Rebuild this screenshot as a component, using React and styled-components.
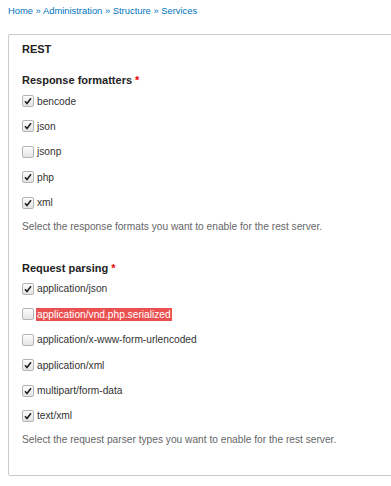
import React from 'react';
import styled, { createGlobalStyle } from 'styled-components';

const GlobalStyle = createGlobalStyle`
  body {
    margin: 0;
    background: #fff;
    font-family: 'Liberation Sans', Arial, sans-serif;
    color: #333;
  }
`;

const Page = styled.div`
  padding: 4px 8px 0 8px;
`;

const Breadcrumb = styled.div`
  font-size: 9.4px;
  line-height: 13px;
  color: #0074bd;
  a {
    color: #0074bd;
    text-decoration: none;
  }
`;

const Fieldset = styled.fieldset`
  margin: 17px -20px 0 0;
  padding: 7px 13px 28px 13px;
  border: 1px solid #ccc;
  border-radius: 2px;
  box-shadow: inset 0 0 1px rgba(0, 0, 0, 0.05);
  min-width: 0;
`;

const Legend = styled.div`
  font-size: 11px;
  font-weight: bold;
  line-height: 14px;
  color: #222;
  margin-bottom: 17px;
`;

const Group = styled.div`
  margin-bottom: ${(p) => p.$gap || 0}px;
`;

const GroupTitle = styled.div`
  font-size: 11px;
  font-weight: bold;
  line-height: 14px;
  color: #222;
  margin-bottom: 7px;
  .req {
    color: #e00;
    margin-left: 3px;
  }
`;

const Item = styled.label`
  display: flex;
  align-items: center;
  gap: 2px;
  height: 14px;
  margin-bottom: 11.4px;
  font-size: 10.2px;
  color: #333;
`;

const Box = styled.span`
  width: 10px;
  height: 10px;
  border: 1px solid #b4b4b4;
  border-radius: 2px;
  background: linear-gradient(#fdfdfd, #e4e4e4);
  display: flex;
  align-items: center;
  justify-content: center;
  flex: none;
`;

const LabelText = styled.span`
  padding: 1px 1px;
  background: ${(p) => (p.$error ? '#ea5050' : 'transparent')};
  color: ${(p) => (p.$error ? '#fff' : '#333')};
`;

const Description = styled.div`
  font-size: 10.2px;
  line-height: 14px;
  color: #666;
  margin-top: -1px;
`;

function Check({ checked }) {
  return (
    <Box>
      {checked && (
        <svg width="8" height="8" viewBox="0 0 8 8">
          <path d="M1 4.3 L3 6.5 L7 1.2" fill="none" stroke="#222" strokeWidth="1.6" />
        </svg>
      )}
    </Box>
  );
}

const formatters = [
  { name: 'bencode', checked: true },
  { name: 'json', checked: true },
  { name: 'jsonp', checked: false },
  { name: 'php', checked: true },
  { name: 'xml', checked: true },
];

const parsers = [
  { name: 'application/json', checked: true },
  { name: 'application/vnd.php.serialized', checked: false, error: true },
  { name: 'application/x-www-form-urlencoded', checked: false },
  { name: 'application/xml', checked: true },
  { name: 'multipart/form-data', checked: true },
  { name: 'text/xml', checked: true },
];

export default function App() {
  return (
    <Page>
      <GlobalStyle />
      <Breadcrumb>
        <a href="#">Home</a> » <a href="#">Administration</a> » <a href="#">Structure</a> »{' '}
        <a href="#">Services</a>
      </Breadcrumb>
      <Fieldset>
        <Legend>REST</Legend>
        <Group $gap={27}>
          <GroupTitle>
            Response formatters<span className="req">*</span>
          </GroupTitle>
          {formatters.map((f) => (
            <Item key={f.name}>
              <Check checked={f.checked} />
              <LabelText>{f.name}</LabelText>
            </Item>
          ))}
          <Description>Select the response formats you want to enable for the rest server.</Description>
        </Group>
        <Group>
          <GroupTitle>
            Request parsing<span className="req">*</span>
          </GroupTitle>
          {parsers.map((p) => (
            <Item key={p.name}>
              <Check checked={p.checked} />
              <LabelText $error={p.error}>{p.name}</LabelText>
            </Item>
          ))}
          <Description>Select the request parser types you want to enable for the rest server.</Description>
        </Group>
      </Fieldset>
    </Page>
  );
}
